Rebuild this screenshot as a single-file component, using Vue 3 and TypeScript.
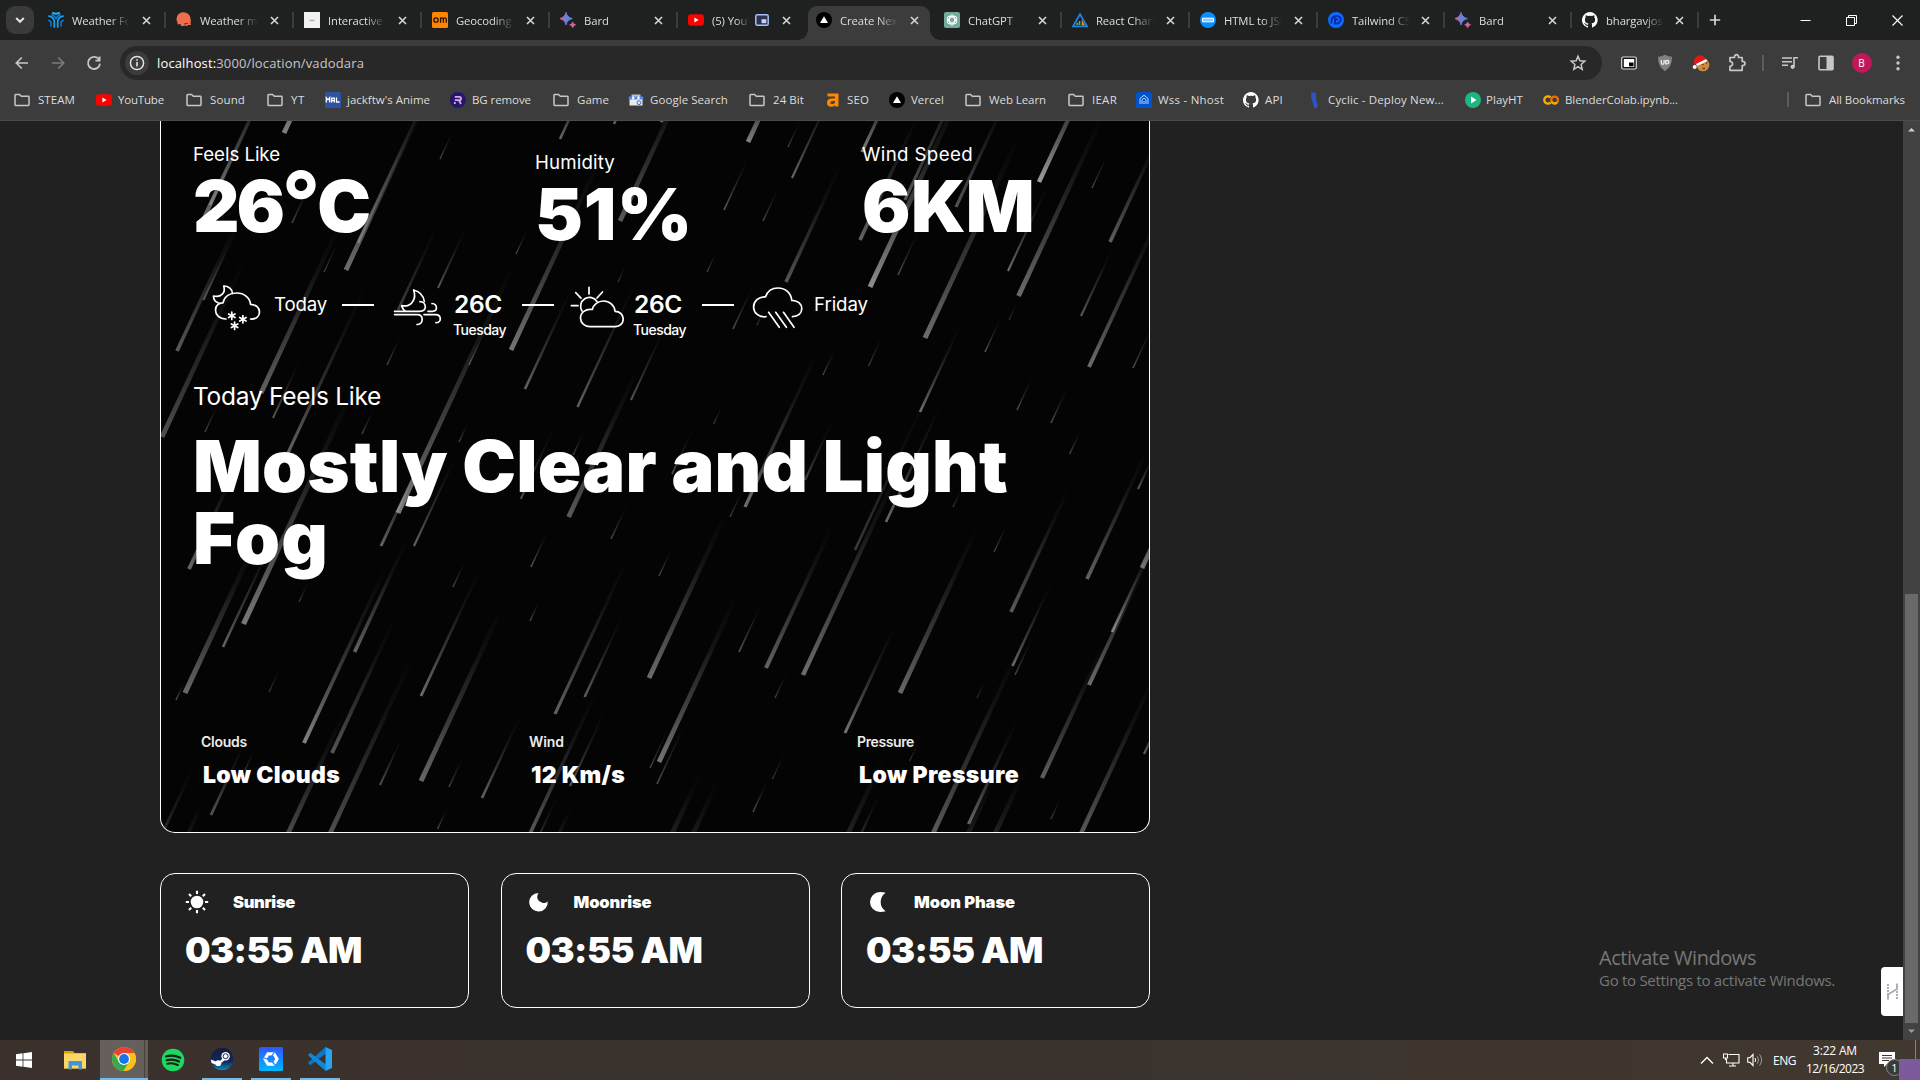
<script setup lang="ts">
import type { Directive } from 'vue'

interface Tab { icon: string; title: string; pip?: boolean; active?: boolean; line?: boolean; w: number }
interface Bookmark { icon: string; title: string; step: number; gap: number; w: number }
interface Card { icon: string; title: string; titleWidth: number }

// Tracks a label out (or in) so that it takes the given advance width.
const vFit: Directive<HTMLElement, number> = {
  mounted(el, { value }) {
    const natural = el.getBoundingClientRect().width
    const count = (el.textContent ?? '').length
    if (natural > 0 && count > 0) el.style.letterSpacing = `${((value - natural) / count).toFixed(3)}px`
  },
}

const tabs: Tab[] = [
  { icon: 'tomorrow', title: 'Weather Forecast', line: true, w: 128 },
  { icon: 'meteo', title: 'Weather maps', line: true, w: 128 },
  { icon: 'doc', title: 'Interactive map', line: true, w: 128 },
  { icon: 'om', title: 'Geocoding API', line: true, w: 128 },
  { icon: 'bard', title: 'Bard', line: true, w: 128 },
  { icon: 'youtube', title: '(5) YouTube', pip: true, w: 128 },
  { icon: 'vercel', title: 'Create Next App', active: true, w: 128 },
  { icon: 'gpt', title: 'ChatGPT', line: true, w: 128 },
  { icon: 'react', title: 'React Charts', line: true, w: 128 },
  { icon: 'jsx', title: 'HTML to JSX', line: true, w: 128 },
  { icon: 'tail', title: 'Tailwind CSS', line: true, w: 127 },
  { icon: 'bard', title: 'Bard', line: true, w: 127 },
  { icon: 'github', title: 'bhargavjoshi', line: true, w: 127 },
]

const bookmarks: Bookmark[] = [
  { icon: 'folder', title: 'STEAM', step: 82, gap: 8, w: 37 },
  { icon: 'youtube', title: 'YouTube', step: 90, gap: 6, w: 46 },
  { icon: 'folder', title: 'Sound', step: 81, gap: 8, w: 35 },
  { icon: 'folder', title: 'YT', step: 58, gap: 8, w: 14 },
  { icon: 'mal', title: "jackftw's Anime", step: 125, gap: 6, w: 83 },
  { icon: 'bg', title: 'BG remove', step: 103, gap: 6, w: 59 },
  { icon: 'folder', title: 'Game', step: 75, gap: 8, w: 32 },
  { icon: 'shop', title: 'Google Search', step: 121, gap: 6, w: 78 },
  { icon: 'folder', title: '24 Bit', step: 76, gap: 8, w: 31 },
  { icon: 'ahrefs', title: 'SEO', step: 64, gap: 6, w: 22 },
  { icon: 'vercel', title: 'Vercel', step: 76, gap: 6, w: 33 },
  { icon: 'folder', title: 'Web Learn', step: 103, gap: 8, w: 57 },
  { icon: 'folder', title: 'IEAR', step: 68, gap: 8, w: 25 },
  { icon: 'nhost', title: 'Wss - Nhost', step: 107, gap: 6, w: 66 },
  { icon: 'github', title: 'API', step: 63, gap: 6, w: 18 },
  { icon: 'cyclic', title: 'Cyclic - Deploy New...', step: 159, gap: 6, w: 116 },
  { icon: 'play', title: 'PlayHT', step: 78, gap: 5, w: 37 },
  { icon: 'colab', title: 'BlenderColab.ipynb...', step: 150, gap: 6, w: 113 },
]

const cards: Card[] = [
  { icon: 'sun', title: 'Sunrise', titleWidth: 62 },
  { icon: 'moon', title: 'Moonrise', titleWidth: 78 },
  { icon: 'phase', title: 'Moon Phase', titleWidth: 101 },
]

// Raindrops: tip x, tip y, fall height, thickness, brightness at the tip.
const rain: number[][] = [
  [284, 133, 130, 4, .5], [346, 270, 190, 4, .42], [358, 243, 170, 2, .25], [203.5, 300, 75, 1.6, .32], [177, 351, 130, 3, .35],
  [203, 220, 160, 3.4, .42], [210, 205, 140, 2.4, .22], [292, 223, 38, 1.5, .25], [440, 159, 28, 1, .28], [438, 288, 60, 1.6, .33],
  [398, 310, 85, 2.2, .25], [324, 272, 32, 1, .25], [261, 393, 170, 4, .38], [273, 418, 58, 1.6, .33], [287, 455, 170, 2.8, .38],
  [162, 437, 180, 4, .3], [205, 432, 30, 1, .28], [362, 434, 26, 1, .28], [398, 513, 250, 4.2, .47], [387, 365, 30, 1, .3],
  [469, 365, 34, 1, .3], [511, 350, 190, 4, .45], [525, 389, 100, 2.2, .38], [577.5, 407, 125, 2, .38], [631, 400, 75, 1.6, .32],
  [516, 254, 26, 1, .28], [620, 221, 150, 4, .34], [560, 139, 60, 2.2, .4], [614, 124, 30, 2, .4], [661, 122, 50, 3, .4],
  [618, 282, 17, 1, .22], [748, 142, 80, 4, .5], [788, 147, 27, 1, .26], [792, 178, 90, 1.9, .4], [724, 210, 52, 1.5, .35],
  [763, 221, 35, 1, .3], [707, 272, 22, 1, .25], [786, 282, 118, 3, .32], [862, 152, 80, 2.8, .5], [860, 240, 125, 3, .38],
  [870, 287, 195, 4.2, .55], [905, 200, 150, 2.8, .33], [898, 275, 46, 1.2, .3], [925, 338, 200, 4.2, .42], [956, 207, 115, 2.8, .32],
  [1039, 182, 130, 3.8, .62], [1008, 271, 85, 1.8, .42], [1018.5, 296, 180, 4, .42], [1092, 188, 35, 1.1, .28], [1110, 242, 110, 3, .37],
  [1081, 316, 70, 1.9, .33], [1089, 367, 165, 3.2, .42], [1133, 368, 42, 1.3, .3], [733, 329, 42, 1.3, .32], [757, 325, 18, 1, .2],
  [823, 375, 26, 1, .3], [868.5, 366, 30, 1.1, .25], [920, 412, 85, 2.2, .42], [985, 352, 34, 1.2, .33], [1009, 320, 18, 1, .18],
  [1017, 410, 34, 1.2, .3], [1051, 423, 36, 1.2, .3], [1069.6, 454, 26, 1.2, .25], [713.6, 424, 18, 1.1, .25], [745, 507, 155, 2.9, .42],
  [730, 517, 28, 1.1, .25], [672, 474, 44, 1.4, .3], [805, 480, 60, 1.9, .25], [886, 522, 118, 2.2, .4], [855, 550, 160, 2.2, .22],
  [803, 675, 215, 3.8, .42], [953, 507, 18, 1.1, .22], [994, 552, 30, 1.1, .28], [766, 668, 143, 3.5, .38], [659, 576, 30, 1.1, .28],
  [649, 678, 165, 4, .42], [739, 652, 50, 1.4, .32], [1011, 612, 125, 3, .35], [1087, 579, 128, 3, .38], [1142, 568, 110, 4, .42],
  [1112, 632, 90, 2.3, .45], [1089, 685, 130, 3.2, .42], [1012.5, 666, 82, 2.1, .4], [1015, 675, 40, 1.2, .25], [900, 693, 168, 4, .4],
  [1138, 489, 32, 1.6, .35], [775, 698, 26, 1.1, .25], [845, 733, 105, 2.6, .45], [659, 762, 165, 4, .45], [657, 784, 62, 1.4, .28],
  [650, 768, 42, 1.2, .25], [977, 698, 18, 1.1, .18], [1042, 778, 135, 3.6, .36], [1078, 840, 165, 3.8, .36], [930, 840, 195, 4, .36],
  [968.5, 824, 105, 2.8, .38], [1144, 754, 45, 2, .35], [1051, 819, 22, 1.2, .22], [772.5, 779, 26, 1.1, .22], [753, 812, 32, 1.3, .3],
  [909.6, 761, 20, 1, .2], [846, 838, 90, 4, .13], [993, 838, 75, 4, .13], [966, 838, 70, 4, .1], [670, 838, 70, 4, .12],
  [691, 838, 60, 4, .1], [859, 838, 45, 2, .18], [189, 569, 100, 3, .4], [243.5, 624, 235, 4.4, .47], [223, 647, 110, 2.1, .38],
  [185, 693, 155, 4.4, .4], [299, 602, 20, 1.1, .25], [269, 692, 24, 1.1, .22], [381, 546, 85, 2.6, .38], [414, 546, 90, 1.9, .38],
  [354.6, 652, 112, 3, .38], [421, 696, 125, 2.4, .42], [453, 587, 26, 1.1, .28], [459, 442, 20, 1.1, .28], [568.6, 517, 150, 4, .35],
  [520.7, 499, 75, 1.6, .3], [531, 567, 36, 1.2, .33], [530, 621, 20, 1.2, .28], [611, 539, 34, 1.2, .28], [573, 455, 24, 1.3, .25],
  [584.6, 697, 82, 2, .36], [304, 743, 175, 3.2, .5], [332, 753, 135, 3.2, .33], [211, 815, 75, 2.3, .32], [380, 785, 48, 1.7, .3],
  [421, 781, 175, 4.2, .4], [449, 787, 32, 1.2, .25], [482, 798, 82, 2.1, .38], [437.5, 829, 22, 1.2, .28], [555, 714, 155, 2.8, .38],
  [570, 786, 75, 1.8, .32], [285, 840, 130, 4, .3], [327, 840, 185, 4, .32], [527, 840, 150, 3, .36], [537, 840, 45, 1.7, .2],
  [556, 840, 35, 3, .1], [163, 832, 70, 2.6, .15], [185, 840, 40, 3, .1], [176, 700, 18, 1.3, .3], [245, 770, 18, 1.3, .2],
]

const slope = 0.466
const drops = rain.map(([x, y, h, w, a]) => {
  const cx = x - 161
  const cy = y - 121
  const tx = cx + h * slope
  const hw = w / 2 / Math.cos(0.436)
  const r = (n: number) => n.toFixed(1)
  const sag = w * 0.22
  return {
    d: `M${r(cx - hw)} ${r(cy - sag)} L${r(cx + hw)} ${r(cy + sag)} L${r(tx + hw)} ${r(cy - h)} L${r(tx - hw)} ${r(cy - h)}Z`,
    a,
  }
})
</script>

<template>
  <div class="screen">
    <svg width="0" height="0" class="defs" aria-hidden="true">
      <defs>
        <linearGradient id="drop" x1="0" y1="0" x2="0" y2="1"><stop offset="0" stop-color="#fff" stop-opacity="0" /><stop offset=".3" stop-color="#fff" stop-opacity=".14" /><stop offset=".65" stop-color="#fff" stop-opacity=".52" /><stop offset="1" stop-color="#fff" /></linearGradient>
        <linearGradient id="bardg" x1="0" y1="0" x2="1" y2="0"><stop offset="0" stop-color="#d9627a" /><stop offset=".5" stop-color="#6b7fe0" /><stop offset="1" stop-color="#4a8fd0" /></linearGradient>
        <linearGradient id="sq" x1="0" y1="0" x2="0" y2="1"><stop offset="0" stop-color="#3055ff" /><stop offset="1" stop-color="#00b8ff" /></linearGradient>
        <linearGradient id="stm" x1="0" y1="0" x2="0" y2="1"><stop offset="0" stop-color="#171a3a" /><stop offset=".6" stop-color="#10285c" /><stop offset="1" stop-color="#1387b8" /></linearGradient>
        <symbol id="i-folder" viewBox="0 0 16 16"><path d="M1 3.2Q1 2.5 1.7 2.5H5.6L7.3 4.2H14.3Q15 4.2 15 4.9V12.8Q15 13.5 14.3 13.5H1.7Q1 13.5 1 12.8Z" fill="none" stroke="#c7c7c7" stroke-width="1.5" /></symbol>
        <symbol id="i-youtube" viewBox="0 0 16 16"><rect y="2.3" width="16" height="11.4" rx="3" fill="#f00" /><path d="M6.4 5.6V10.4L10.6 8Z" fill="#fff" /></symbol>
        <symbol id="i-mal" viewBox="0 0 16 16"><rect width="16" height="16" rx="1.5" fill="#2e51a2" /><path d="M1.3 10.500V5.700L3 7.800L4.700 5.700V10.500M6.700 10.500V6.200H9.300V10.500M6.700 8.700H9.300M11.500 5.500V10H14.600" fill="none" stroke="#fff" stroke-width="1.300" /></symbol>
        <symbol id="i-bg" viewBox="0 0 16 16"><circle cx="8" cy="8" r="8" fill="#24186c" /><path d="M4.8 12V10M4.8 4.8H9.4Q11 4.8 11 6.5Q11 8.2 9.4 8.2H4.8M9 8.5L11 12" fill="none" stroke="#dda8e8" stroke-width="1.8" /></symbol>
        <symbol id="i-shop" viewBox="0 0 16 16"><path d="M1.500 6H14.500V13.500H1.500Z" fill="#e8eaed" /><path d="M3.500 2.500H12.500V5H3.500Z" fill="#b9bec6" /><path d="M.8 4.500H15.200V7.500H.8Z" fill="#4c8bf5" /><path d="M4.200 4.500H6.200V7.500H4.200ZM9.500 4.500H11.500V7.500H9.500Z" fill="#fff" /><circle cx="11" cy="10.700" r="1.900" fill="none" stroke="#4c6fb0" /></symbol>
        <symbol id="i-ahrefs" viewBox="0 0 16 16"><path d="M2.5 1.5H13.5V14.5H10V13.2Q8.5 14.8 6 14.8Q2 14.8 2 10.8Q2 6.8 6.5 6.6L10 6.3V4.4H2.5ZM10 9L7 9.3Q5.4 9.5 5.4 10.7Q5.4 11.9 6.8 11.9Q9 11.9 10 10.7Z" fill="#ff8800" /></symbol>
        <symbol id="i-vercel" viewBox="0 0 16 16"><circle cx="8" cy="8" r="8" fill="#000" /><path d="M8 4.2L12 11H4Z" fill="#fff" /></symbol>
        <symbol id="i-nhost" viewBox="0 0 16 16"><rect width="16" height="16" rx="2" fill="#0052cd" /><path d="M4 12V6.5L8 3.2L12 6.5V12M6 12V7.6L8 6L10 7.6V12M8 12V9" fill="none" stroke="#b9d4ff" stroke-width="1" /></symbol>
        <symbol id="i-github" viewBox="0 0 16 16"><path d="M8 0a8 8 0 0 0-2.53 15.59c.4.07.55-.17.55-.38V13.7c-2.23.48-2.7-1.07-2.7-1.07-.36-.93-.89-1.17-.89-1.17-.73-.5.05-.49.05-.49.81.06 1.23.83 1.23.83.72 1.23 1.88.87 2.34.66.07-.52.28-.87.5-1.07-1.77-.2-3.64-.89-3.64-3.95 0-.87.31-1.59.82-2.15-.08-.2-.36-1.01.08-2.11 0 0 .67-.22 2.2.82a7.6 7.6 0 0 1 4 0c1.53-1.04 2.2-.82 2.2-.82.44 1.1.16 1.91.08 2.11.51.56.82 1.28.82 2.15 0 3.07-1.87 3.75-3.65 3.95.29.25.54.73.54 1.48v2.2c0 .21.15.46.55.38A8 8 0 0 0 8 0Z" fill="#fff" /></symbol>
        <symbol id="i-cyclic" viewBox="0 0 16 16"><path d="M5.5 0L10 1V8L12 13.5L11 16H8L6.5 10L5 5Z" fill="#2b55c4" /></symbol>
        <symbol id="i-play" viewBox="0 0 16 16"><circle cx="8" cy="8" r="8" fill="#1fb57f" /><path d="M6 4.6V11.4L11.5 8Z" fill="#fff" /></symbol>
        <symbol id="i-colab" viewBox="0 0 16 16"><g fill="none" stroke-width="2.3"><path d="M7.6 5.4A3.7 3.7 0 1 0 7.6 10.6" stroke="#f9ab00" /><circle cx="11.6" cy="8" r="3.4" stroke="#e8710a" /><path d="M8.4 9.4A3.4 3.4 0 0 0 14 10.4" stroke="#f9ab00" /></g></symbol>
        <symbol id="i-bard" viewBox="0 0 16 16"><path d="M6 0.3Q7.1 5.3 12.4 6.6Q7.1 7.9 6 13Q4.9 7.9-.3 6.6Q4.9 5.3 6 .3Z" fill="url(#bardg)" stroke="url(#bardg)" stroke-width=".8" /><path d="M12.7 9.8Q13.3 12.1 15.8 12.8Q13.3 13.5 12.7 15.9Q12.1 13.5 9.6 12.8Q12.1 12.1 12.7 9.8Z" fill="#d0669a" stroke="#d0669a" stroke-width=".5" /></symbol>
        <symbol id="i-tomorrow" viewBox="0 0 16 16"><g fill="none" stroke-width="2" stroke-linecap="round"><path d="M5 1Q8 2.4 11 1" stroke="#19b7ff" /><path d="M1 4.200Q5.800 5 6.300 9.500V15M15 4.200Q10.200 5 9.700 9.500V15" stroke="#12a5f5" stroke-width="1.700" /><path d="M.8 8.400Q2.900 8.800 3 11.500V14M15.200 8.400Q13.100 8.800 13 11.500V14M3.800 2.800Q7 4.200 8 6.500Q9 4.200 12.200 2.800" stroke="#0c7be0" stroke-width="1.500" /></g></symbol>
        <symbol id="i-meteo" viewBox="0 0 16 16"><path d="M.5 7A7 6.5 0 0 1 14.5 6.5Q15.3 9 14.5 10.5L15 13H11.5V14H5L4.5 12L1.5 12.5V10Q.3 9 .5 7Z" fill="#ec6e4c" /><path d="M8.500 11.500H12M9 14V11.500" stroke="#77302a" fill="none" /></symbol>
        <symbol id="i-doc" viewBox="0 0 16 16"><rect width="16" height="16" fill="#f1f1f1" /><path d="M5.500 8.500H10.500" stroke="#aab09a" stroke-width="1.400" /></symbol>
        <symbol id="i-om" viewBox="0 0 16 16"><rect width="16" height="16" rx="1.5" fill="#ff8400" /><circle cx="4" cy="8" r="2.2" fill="none" stroke="#2b1500" stroke-width="1.3" /><path d="M8.6 10.8V5.5M8.6 7.2Q9 5.9 10.1 5.9Q11.4 5.9 11.4 7.3V10.8M11.4 7.2Q12 5.9 13 5.9Q14.3 5.9 14.3 7.3V10.8" fill="none" stroke="#2b1500" stroke-width="1.3" /></symbol>
        <symbol id="i-gpt" viewBox="0 0 16 16"><rect width="16" height="16" rx="2" fill="#74aa9c" /><g fill="none" stroke="#fff" stroke-width="1"><ellipse cx="8" cy="8" rx="2.7" ry="5.2" /><ellipse cx="8" cy="8" rx="2.7" ry="5.2" transform="rotate(60 8 8)" /><ellipse cx="8" cy="8" rx="2.7" ry="5.2" transform="rotate(120 8 8)" /></g></symbol>
        <symbol id="i-react" viewBox="0 0 16 16"><path d="M8 2.2L15 14.4H1Z" fill="none" stroke="#1d84e8" stroke-width="1.8" /><path d="M5.2 13V10.8M7.5 13V9" stroke="#4fc04f" stroke-width="1.6" /><path d="M9.7 13.2V7.5L12.8 13.2Z" fill="#f09030" /></symbol>
        <symbol id="i-jsx" viewBox="0 0 16 16"><circle cx="8" cy="8" r="8" fill="#0a8dff" /><path d="M2.500 6.200H13.500V9.800H2.500Z" fill="#8ccaff" stroke="#fff" stroke-width="1" /></symbol>
        <symbol id="i-tail" viewBox="0 0 16 16"><circle cx="8" cy="8" r="8" fill="#0b6cff" /><path d="M3.500 11.500Q2.500 5 8 3.800Q13 4 12.800 8Q11.500 12 7 11.500V6.500L10 8" fill="none" stroke="#0628a8" stroke-width="1.800" /></symbol>
        <symbol id="i-sun" viewBox="0 0 24 24"><circle cx="12" cy="12" r="6.300" fill="#fff" /><path d="M12 .8V4M12 20V23.2M.8 12H4M20 12H23.2M4 4L6.2 6.2M17.8 17.8L20 20M4 20L6.2 17.8M17.8 6.2L20 4" stroke="#fff" stroke-width="2.1" /></symbol>
        <symbol id="i-moon" viewBox="0 0 24 24"><path d="M12.500 2.900A9.300 9.300 0 1 0 21.700 11.200Q19.500 13.800 16.200 12.800Q11.800 11.200 11.200 7.500Q11 5 12.500 2.900Z" fill="#fff" /></symbol>
        <symbol id="i-phase" viewBox="0 0 24 24"><path d="M19.600 2.800Q17.500 2 14 2A10 10 0 0 0 14 22Q17.500 22 19.600 21.200A11 11 0 0 1 19.600 2.800Z" fill="#fff" /></symbol>
      </defs>
    </svg>

    <header class="chrome">
      <div class="strip">
        <button class="search-tabs"><svg width="12" height="12" viewBox="0 0 12 12"><path d="M2.2 4L6 7.8L9.8 4" fill="none" stroke="#e3e3e3" stroke-width="2" /></svg></button>
        <div v-for="(t, i) in tabs" :key="i" class="tab" :class="{ active: t.active, line: t.line, slim: t.w < 128 }" :style="{ width: t.w + 'px' }">
          <svg class="fav"><use :href="'#i-' + t.icon" /></svg>
          <span class="title" :class="{ short: t.pip }">{{ t.title }}</span>
          <svg v-if="t.pip" class="pip" width="14" height="12" viewBox="0 0 14 12"><rect x=".8" y=".8" width="12.4" height="10.4" rx="1.5" fill="#2b3350" stroke="#a8c0f5" stroke-width="1.5" /><rect x="6.5" y="5.2" width="4.8" height="4" fill="#c3d4fb" /></svg>
          <svg class="x" width="9" height="9" viewBox="0 0 9 9"><path d="M1 1L8 8M8 1L1 8" stroke="#d5d5d5" stroke-width="1.6" /></svg>
        </div>
        <svg class="plus" width="12" height="12" viewBox="0 0 12 12"><path d="M6 .8V11.2M.8 6H11.2" stroke="#d5d5d5" stroke-width="1.7" /></svg>
        <div class="win">
          <svg width="11" height="11" viewBox="0 0 11 11"><path d="M.5 5.5H10.5" stroke="#fff" /></svg>
          <svg width="11" height="11" viewBox="0 0 11 11"><path d="M.5 2.5H8.5V10.5H.5ZM2.5 2.5V.5H10.5V8.5H8.5" fill="none" stroke="#fff" /></svg>
          <svg width="11" height="11" viewBox="0 0 11 11"><path d="M.5.5L10.5 10.5M10.5.5L.5 10.5" stroke="#fff" stroke-width="1.1" /></svg>
        </div>
      </div>

      <div class="toolbar">
        <div class="nav">
          <svg viewBox="0 0 16 16"><path d="M14 8H2.5M7.8 2.5L2.3 8L7.8 13.5" fill="none" stroke="#c7c7c7" stroke-width="1.7" /></svg>
          <svg viewBox="0 0 16 16"><path d="M2 8H13.5M8.2 2.5L13.7 8L8.2 13.5" fill="none" stroke="#7b7b7b" stroke-width="1.7" /></svg>
          <svg viewBox="0 0 16 16"><path d="M13 4.6A6 6 0 1 0 14 8.6M13.6 1.5V5.6H9.4" fill="none" stroke="#c7c7c7" stroke-width="1.8" /></svg>
        </div>
        <div class="omnibox">
          <span class="info"><svg width="16" height="16" viewBox="0 0 16 16"><circle cx="8" cy="8" r="6.6" fill="none" stroke="#e3e3e3" stroke-width="1.5" /><path d="M8 7V11.6M8 4.2V5.8" stroke="#e3e3e3" stroke-width="1.6" /></svg></span>
          <span v-fit="207" class="url"><b>localhost:</b>3000/location/vadodara</span>
          <svg class="star" width="18" height="18" viewBox="0 0 18 18"><path d="M9 2.2L10.9 6.8L15.8 7.2L12.1 10.4L13.2 15.3L9 12.7L4.8 15.3L5.9 10.4L2.2 7.2L7.1 6.8Z" fill="none" stroke="#c7c7c7" stroke-width="1.5" /></svg>
        </div>
        <div class="ext">
          <svg viewBox="0 0 20 20"><rect x="2.7" y="4" width="14.600" height="12" rx="1.500" fill="#111" stroke="#ddd" stroke-width="1.200" /><rect x="4.800" y="6" width="10.400" height="8" fill="#fff" /><rect x="10" y="9.500" width="4.500" height="3.800" fill="#000" /></svg>
          <svg viewBox="0 0 20 20"><path d="M10 1.8Q13.5 3.8 17 3.8Q17.5 13.5 10 18.2Q2.5 13.5 3 3.8Q6.5 3.8 10 1.8Z" fill="#808080" /><path d="M6.3 7V9.6Q6.3 11.3 7.7 11.3Q9.1 11.3 9.1 9.6V7M10.8 7.3V10.8Q13.9 11 13.9 9Q13.9 7.1 10.8 7.3" fill="none" stroke="#eee" stroke-width="1.3" /></svg>
          <svg viewBox="0 0 20 20"><circle cx="12" cy="12" r="6.300" fill="#d08a3c" /><path d="M11 11L12.500 12M15 9.500L16 10.500M11.500 15.500H14" stroke="#6b3d12" stroke-width="1.500" /><path d="M3 12Q2 3 9 2.200Q13 2.200 15.500 6.500L5 11.500Z" fill="#e01818" /><path d="M5 11L15.200 6L16.200 8.200L6 13Z" fill="#fff" /><circle cx="3.700" cy="14" r="2" fill="#fff" /></svg>
          <svg viewBox="0 0 20 20"><path d="M3 4.5H7.5Q7.3 1.7 9.5 1.7Q11.7 1.7 11.5 4.5H15.2V8.3Q18 8.3 18 10.4Q18 12.5 15.2 12.5V17.3H3V13.3Q5.6 13 5.6 10.8Q5.6 8.8 3 8.5Z" fill="none" stroke="#c7c7c7" stroke-width="1.7" stroke-linejoin="round" /></svg>
          <i class="bar"></i>
          <svg viewBox="0 0 20 20"><path d="M2 5H12M2 8.7H12M2 12.3H8M14 14V4.7H18" fill="none" stroke="#c7c7c7" stroke-width="1.6" /><circle cx="12.6" cy="13.8" r="2.1" fill="#c7c7c7" /></svg>
          <svg viewBox="0 0 20 20"><rect x="3" y="3.2" width="14" height="13.6" rx="1" fill="none" stroke="#c7c7c7" stroke-width="1.6" /><rect x="10.5" y="3.2" width="6.5" height="13.6" fill="#c7c7c7" /></svg>
          <span class="avatar">B</span>
          <svg viewBox="0 0 20 20"><g fill="#c7c7c7"><circle cx="10" cy="4.2" r="1.7" /><circle cx="10" cy="10" r="1.7" /><circle cx="10" cy="15.8" r="1.7" /></g></svg>
        </div>
      </div>

      <div class="bookmarks">
        <div v-for="b in bookmarks" :key="b.title" class="bm" :style="{ width: b.step + 'px', gap: b.gap + 'px' }">
          <svg class="fav"><use :href="'#i-' + b.icon" /></svg>
          <span v-fit="b.w">{{ b.title }}</span>
        </div>
        <div class="bm all">
          <svg class="fav"><use href="#i-folder" /></svg>
          <span v-fit="76">All Bookmarks</span>
        </div>
      </div>
    </header>

    <div class="view">
      <main class="page">
        <section class="weather">
          <svg class="rain" width="988" height="711" viewBox="0 0 988 711">
            <path v-for="(p, i) in drops" :key="i" :d="p.d" fill="url(#drop)" :fill-opacity="p.a" />
          </svg>
          <div class="metrics">
            <div><p class="label"><span v-fit="87">Feels Like</span></p><p class="big"><span v-fit="175">26<span class="ring">°</span>C</span></p></div>
            <div class="low"><p class="label"><span v-fit="80">Humidity</span></p><p class="big"><span v-fit="158">51%</span></p></div>
            <div class="speed"><p class="label"><span v-fit="111">Wind Speed</span></p><p class="big"><span v-fit="173">6KM</span></p></div>
          </div>

          <div class="forecast">
            <div class="day">
              <svg class="wx" viewBox="0 0 54 50"><path d="M16 38C9 38 5.5 33.5 5.5 29C5.5 24.5 9 21.5 13 21.8C14.5 15.5 20 12 26.500 12C34.500 12 40 17 40.500 23.300C46 23.500 49.500 27 49.500 31C49.500 35.500 46 38.500 40.500 38" /><path d="M22.500 12.500C22.500 8 18.500 5 13.700 5C16 11.500 11 17 3.500 15C3.500 18 5.500 21 8.500 22" /><path d="M21.800 31V38.500M18.600 33L25 36.600M25 33L18.600 36.600M32.900 34.500V42M29.700 36.500L36.100 40.100M36.100 36.500L29.700 40.100M24.600 41V48.500M21.400 43L27.800 46.600M27.800 43L21.400 46.600" /></svg>
              <span v-fit="53" class="name">Today</span><i class="dash"></i>
            </div>
            <div class="day">
              <svg class="wx" viewBox="0 0 54 50"><path d="M23.600 9C30 10.500 33.500 15 34.300 20.500M23.600 9C27 18 21 26.500 11.800 24.700C12.500 27.500 14 29.500 15.500 30.300" /><path d="M4.600 30.300H29.600C33.500 30.300 35.300 28.500 35.300 26C35.300 23 33 20.700 30 20.700M38 30.300H42.500C45 30.300 46.400 28.800 46.400 26.800C46.400 24.500 44.500 22.700 42 22.500M4.600 33.600H27.500C30.500 33.600 32.200 35.800 32.200 38.500C32.200 41.500 30 43.500 27 43.500M34 33.600H45.500C48.500 33.600 50.300 35.500 50.300 38C50.300 40 48.500 41.700 46 41.700" /></svg>
              <div class="pair"><span v-fit="48" class="deg">26C</span><span v-fit="53" class="sub">Tuesday</span></div><i class="dash"></i>
            </div>
            <div class="day">
              <svg class="wx" viewBox="0 0 54 50"><path d="M12 30A8.700 8.700 0 1 1 27 20.500M19 6.300V13M1.400 24.700H8M5.700 11.700L11 17.200M32.500 11L27 17" /><path d="M20 45.700H45.500C50 45.700 53.200 42.300 53.200 38C53.200 33.700 50 30.300 45 30.300C44.500 24.500 39.500 20 33.500 20C28 20 23.500 23.500 22.300 28.500C15.500 27.500 10.500 31.500 10.500 37C10.500 42 14.500 45.700 20 45.700Z" /></svg>
              <div class="pair"><span v-fit="48" class="deg">26C</span><span v-fit="53" class="sub">Tuesday</span></div><i class="dash"></i>
            </div>
            <div class="day">
              <svg class="wx" viewBox="0 0 54 50"><path d="M16 35.700C8 36.500 3.600 31.500 3.600 26C3.600 20.500 8.500 15.500 15.500 15.800C17.500 10 22 7 28 7C35.500 7 41 12 41.800 19.300C47.500 19.300 51.800 23 51.800 27.500C51.800 32.500 48 35.700 42.500 35.700" /><path d="M18.600 31.300L29.300 46.300M25.700 31.300L36.400 46.300M33.500 31.300L44 46.300" /></svg>
              <span v-fit="54" class="name">Friday</span>
            </div>
          </div>

          <p class="lead"><span v-fit="188">Today Feels Like</span></p>
          <h1><span v-fit="815">Mostly Clear and Light</span><br><span v-fit="136">Fog</span></h1>

          <div class="details">
            <div><p><span v-fit="46">Clouds</span></p><strong><span v-fit="137">Low Clouds</span></strong></div>
            <div><p><span v-fit="35">Wind</span></p><strong><span v-fit="94">12 Km/s</span></strong></div>
            <div><p><span v-fit="57">Pressure</span></p><strong><span v-fit="160">Low Pressure</span></strong></div>
          </div>
        </section>

        <div class="cards">
          <article v-for="c in cards" :key="c.title" class="card">
            <div class="head"><svg width="24" height="24"><use :href="'#i-' + c.icon" /></svg><span v-fit="c.titleWidth">{{ c.title }}</span></div>
            <p class="time"><span v-fit="177">03:55 AM</span></p>
          </article>
        </div>

        <div class="activate">
          <p class="a1"><span v-fit="157">Activate Windows</span></p>
          <p class="a2"><span v-fit="236">Go to Settings to activate Windows.</span></p>
        </div>
        <div class="widget"><svg width="13" height="17" viewBox="0 0 13 17"><g fill="none" stroke="#a8b0ba" stroke-width="2"><path d="M2 1V9M11 8V16" stroke-dasharray="2 1" /><path d="M2 16.500V11.500L11 6V.5M2 11.500V10" /></g></svg></div>
      </main>
      <div class="scroll">
        <svg width="17" height="17" viewBox="0 0 17 17"><path d="M5 10.500L8.500 7L12 10.500Z" fill="#d0d0d0" /></svg>
        <div class="thumb"></div>
        <svg width="17" height="17" viewBox="0 0 17 17"><path d="M5 6.500L8.500 10L12 6.500Z" fill="#9a9a9a" /></svg>
      </div>
    </div>

    <footer class="taskbar">
      <div class="app first"><svg width="16" height="16" viewBox="0 0 16 16"><path d="M0 2.200L6.600 1.300V7.600H0ZM7.400 1.200L16 0V7.600H7.400ZM0 8.400H6.600V14.700L0 13.800ZM7.400 8.400H16V16L7.400 14.800Z" fill="#fff" /></svg></div>
      <div class="app"><svg width="24" height="24" viewBox="0 0 24 24"><path d="M1 3H10L11.500 5H23V20.500H1Z" fill="#e0a100" /><path d="M1 5.500H23V20.500H1Z" fill="#fdd569" /><path d="M5.500 21.500V14Q5.500 13 6.500 13H18Q19 13 19 14V21.500H15.500V17.500H9V21.500Z" fill="#3f96dc" /></svg></div>
      <div class="app current"><svg width="24" height="24" viewBox="0 0 24 24"><circle cx="12" cy="12" r="12" fill="#fbc116" /><path d="M12 12L1.600 6A12 12 0 0 1 22.400 6Z" fill="#ea4335" /><path d="M1.600 6A12 12 0 0 0 11.500 24L17.200 15L12 12L6.800 15Z" fill="#34a853" /><path d="M12 6H22.400A12 12 0 0 1 11.500 24L17.200 15Z" fill="#fbc116" /><circle cx="12" cy="12" r="6" fill="#fff" /><circle cx="12" cy="12" r="4.900" fill="#1a73e8" /></svg></div>
      <div class="app spot"><svg width="24" height="24" viewBox="0 0 24 24"><circle cx="12" cy="12" r="11.300" fill="#1ed760" /><path d="M5 8.500Q12.500 6.300 19.200 9.800M5.700 12.300Q12.300 10.500 18 13.500M6.300 15.700Q12 14.300 16.700 17" fill="none" stroke="#152017" stroke-width="2.100" stroke-linecap="round" /></svg></div>
      <div class="app run"><svg width="24" height="24" viewBox="0 0 24 24"><circle cx="12" cy="12" r="11.300" fill="url(#stm)" /><path d="M.9 12.500L8.500 15.500L13 11L15.500 12.500L10.500 16.500L9.500 19L1.500 16Z" fill="#fff" /><circle cx="8.300" cy="16.200" r="2.900" fill="#fff" /><circle cx="15.600" cy="9.200" r="4.200" fill="#fff" /><circle cx="15.600" cy="9.200" r="2.500" fill="#fff" stroke="#17285a" stroke-width="1" /></svg></div>
      <div class="app run"><svg width="24" height="24" viewBox="0 0 24 24"><rect width="24" height="24" rx="1.500" fill="url(#sq)" /><path d="M9 6.800H15L18 12L15 17.200H9L6 12Z" fill="none" stroke="#fff" stroke-width="3.200" /><path d="M12.500 9.500L16.500 3.500M4 10.500L9.500 12.500M13.500 15L17.500 19.500" stroke="#1f82ff" stroke-width="1.200" /></svg></div>
      <div class="app run"><svg width="24" height="24" viewBox="0 0 24 24"><path d="M17.500 0L0 15.800L2.200 18.200L18 6.500Z" fill="#0a78c8" /><path d="M17.500 24L0 8.200L2.200 5.800L18 17.500Z" fill="#1187d6" /><path d="M17.500 0L24 3V21L17.500 24Z" fill="#27a5f3" /></svg></div>

      <div class="tray">
        <svg class="chev" width="14" height="9" viewBox="0 0 14 9"><path d="M1 7.500L7 1.500L13 7.500" fill="none" stroke="#fff" stroke-width="1.400" /></svg>
        <svg class="net" width="17" height="14" viewBox="0 0 17 14"><path d="M5.500 1.500H16V10H3.500V6M10 10V13M6 13H13M.5 1H4.500V5H.5ZM2.500 5V7" fill="none" stroke="#fff" stroke-width="1.100" /></svg>
        <svg class="vol" width="17" height="14" viewBox="0 0 17 14"><path d="M.7 4.700H3L6 1.500V12.500L3 9.300H.7Z" fill="none" stroke="#fff" stroke-width="1.100" /><path d="M8 5Q9.300 7 8 9" fill="none" stroke="#fff" /><path d="M10.300 3.300Q12.800 7 10.300 10.700M12.600 1.500Q16.500 7 12.600 12.500" fill="none" stroke="#a09a96" /></svg>
        <span v-fit="23" class="lang">ENG</span>
        <div class="clock"><span v-fit="44">3:22 AM</span><span v-fit="58">12/16/2023</span></div>
        <div class="note">
          <svg width="16" height="16" viewBox="0 0 16 16"><path d="M0 0H16V12H8L5 15V12H0Z" fill="#fff" /><path d="M3 3.500H13M3 6H13M3 8.500H10" stroke="#3d352f" /></svg>
          <span class="count">1</span>
        </div>
        <i class="corner"></i>
      </div>
    </footer>
  </div>
</template>

<style>
body { margin: 0; background: #212121; overflow: hidden; }
</style>

<style scoped>
.screen { width: 1920px; height: 1080px; display: flex; flex-direction: column; background: #212121; font-family: "Open Sans", "Noto Sans", sans-serif; overflow: hidden; }
.defs { position: absolute; }
p, h1 { margin: 0; }
svg { flex: none; display: block; }
.fav { width: 16px; height: 16px; }
.chrome { height: 120px; border-bottom: 1px solid #4b4b4b; background: #3c3c3c; flex: none; }
.strip { height: 40px; display: flex; align-items: center; background: #1f2020; }
.search-tabs { width: 28px; height: 28px; margin: 0 4px 0 6px; border: 0; border-radius: 9px; background: #3a3a3a; display: grid; place-items: center; padding: 0; }
.tab { height: 40px; box-sizing: border-box; padding-left: 10px; display: flex; align-items: center; flex: none; position: relative; font-size: 11.3px; letter-spacing: -0.1px; color: #dedede; isolation: isolate; }
.tab.line::after { content: ""; position: absolute; right: 0; top: 12px; width: 2px; height: 16px; background: #3c3c3c; }
.tab.active::before { content: ""; position: absolute; z-index: -1; left: 2px; right: 4px; top: 6px; bottom: 0; border-radius: 9px 9px 0 0; background: #3c3c3c; }
.tab.active::after { content: ""; position: absolute; z-index: -2; left: -8px; right: -6px; bottom: 0; height: 10px; background: radial-gradient(circle at 0 0, transparent 9.5px, #3c3c3c 10px) left / 10px 10px no-repeat, radial-gradient(circle at 100% 0, transparent 9.5px, #3c3c3c 10px) right / 10px 10px no-repeat; }
.title { width: 58px; margin-left: 8px; overflow: hidden; white-space: nowrap; -webkit-mask-image: linear-gradient(90deg, #000 38px, transparent 58px); mask-image: linear-gradient(90deg, #000 38px, transparent 58px); }
.title.short { width: 38px; -webkit-mask-image: linear-gradient(90deg, #000 24px, transparent 38px); mask-image: linear-gradient(90deg, #000 24px, transparent 38px); }
.slim .title { width: 57px; }
.pip { margin: 0 1px 0 5px; }
.x { margin-left: 11.500px; }
.plus { margin-left: 10px; }
.win { margin-left: auto; margin-right: 17px; display: flex; gap: 35px; }
.toolbar { height: 46px; display: flex; align-items: center; }
.nav { width: 120px; display: flex; gap: 20px; padding-left: 14px; box-sizing: border-box; }
.nav svg { width: 16px; height: 16px; }
.omnibox { width: 1482px; height: 34px; border-radius: 17px; background: #282828; display: flex; align-items: center; padding: 0 15px 0 5px; box-sizing: border-box; }
.info { width: 24px; height: 24px; border-radius: 50%; background: #3c3c3c; display: grid; place-items: center; margin-right: 8px; }
.url { font-size: 13px; color: #c7c7c7; white-space: nowrap; }
.url b { font-weight: 400; color: #fff; }
.star { margin-left: auto; }
.ext { display: flex; align-items: center; gap: 16px; padding-left: 16.500px; }
.ext svg { width: 20px; height: 20px; }
.bar { width: 2px; height: 16px; background: #5c5c5c; margin: 0 -.5px; }
.avatar { width: 20px; height: 20px; border-radius: 50%; background: #c2185b; color: #fff; font-size: 10px; line-height: 20px; text-align: center; }
.bookmarks { height: 27px; display: flex; align-items: center; padding-left: 14px; font-size: 11.500px; color: #dcdcdc; }
.bm { display: flex; align-items: center; white-space: nowrap; flex: none; }
.bm.all { margin-left: auto; gap: 8px; padding-left: 16px; margin-right: 15px; border-left: 2px solid #5c5c5c; height: 15px; }
.view { flex: 1; display: flex; min-height: 0; }
.page { flex: 1; position: relative; padding-left: 160px; overflow: hidden; color: #fff; }
.scroll { width: 17px; background: #424242; display: flex; flex-direction: column; align-items: center; }
.thumb { width: 13px; height: 429px; margin-top: auto; background: #696969; }
.weather { width: 990px; height: 712px; box-sizing: border-box; border: 1px solid #fff; border-top: 0; border-radius: 0 0 15px 15px; background: #040404; overflow: hidden; position: relative; padding: 20px 0 0 32px; font-family: Inter, sans-serif; }
.weather > div, .weather > p, .weather > h1 { position: relative; }
.rain { position: absolute; left: 0; top: 0; }
.metrics { display: grid; grid-template-columns: 342px 326px 1fr; height: 140px; }
.low { padding-top: 8px; }
.speed { padding-left: 1px; }
.label { font-size: 18.700px; line-height: 28px; }
.big { font-size: 72px; line-height: 73px; font-weight: 900; white-space: nowrap; }
.ring { font-size: 84px; line-height: 0; font-weight: 700; }
.forecast { display: flex; height: 56px; padding-left: 17px; }
.day { width: 180px; display: flex; position: relative; }
.wx { width: 54px; height: 50px; margin-right: 10px; fill: none; stroke: #fff; stroke-width: 1.700; stroke-linecap: round; stroke-linejoin: round; }
.name { font-size: 18.700px; line-height: 28px; margin-top: 10px; align-self: flex-start; }
.dash { position: absolute; left: 132px; top: 23px; width: 32px; height: 2px; background: #fff; }
.pair { display: flex; flex-direction: column; align-items: flex-start; padding-top: 8px; }
.deg { font-size: 24.500px; line-height: 31px; font-weight: 600; }
.sub { font-size: 14px; line-height: 19px; font-weight: 500; margin-left: -1px; }
.lead { font-size: 24.500px; line-height: 32px; margin-top: 43px; white-space: nowrap; }
h1 { font-size: 72px; line-height: 72px; font-weight: 900; margin-top: 18px; white-space: nowrap; }
.details { display: grid; grid-template-columns: 328px 328px 1fr; margin-top: 158px; padding-left: 8px; }
.details p { font-size: 14px; line-height: 20px; font-weight: 600; color: #ececec; }
.details strong { display: block; margin: 7px 0 0 2px; font-size: 23px; line-height: 32px; font-weight: 900; white-space: nowrap; }
.cards { display: grid; grid-template-columns: repeat(3, 309px); gap: 31.500px; margin-top: 40px; font-family: Inter, sans-serif; }
.card { height: 135px; box-sizing: border-box; border: 1px solid #fff; border-radius: 15px; padding: 16px 24px; }
.head { display: flex; align-items: center; gap: 24px; font-size: 16.500px; line-height: 24px; font-weight: 900; }
.time { font-size: 36px; line-height: 40px; font-weight: 900; margin-top: 16px; white-space: nowrap; }
.activate { position: absolute; left: 1599px; top: 823px; color: #777; white-space: nowrap; }
.a1 { font-size: 20px; line-height: 27px; }
.a2 { font-size: 15px; line-height: 19px; }
.widget { position: absolute; right: 0; top: 846px; width: 22px; height: 49px; border-radius: 4px 0 0 4px; background: #fff; display: grid; place-items: center; }
.taskbar { height: 40px; flex: none; display: flex; background: linear-gradient(90deg, #3a312d, #3b332e 60%, #41382f); color: #fff; }
.app { width: 40px; margin-right: 9px; display: grid; place-items: center; height: 40px; box-sizing: border-box; }
.first { margin-left: 4px; margin-right: 11px; }
.app.current { width: 48px; margin: 0 5px 0 -4px; padding-right: 0; background: linear-gradient(90deg, #65605b 44px, #47413d 44px, #47413d 45px, #625d59 45px); border-bottom: 2px solid #76b9ed; }
.app.run { border-bottom: 2px solid #76b9ed; }
.tray { margin-left: auto; display: flex; align-items: center; width: 220px; position: relative; font-size: 12px; }
.net { margin-left: 9px; }
.vol { margin-left: 7px; }
.lang { margin-left: 9px; }
.clock { margin-left: 9px; width: 60px; display: flex; flex-direction: column; align-items: center; line-height: 18px; white-space: nowrap; }
.note { position: relative; margin-left: 14px; }
.count { position: absolute; left: 7px; top: 7px; width: 15px; height: 15px; border: 1px solid #888; border-radius: 50%; background: #3a3a3a; font-size: 11px; line-height: 15px; text-align: center; }
.corner { position: absolute; right: 0; bottom: 0; width: 21px; height: 21px; background: #7d5a9c; }
.corner::before { content: ""; position: absolute; right: 4px; bottom: 21px; width: 1px; height: 19px; background: #8a8480; }
</style>
